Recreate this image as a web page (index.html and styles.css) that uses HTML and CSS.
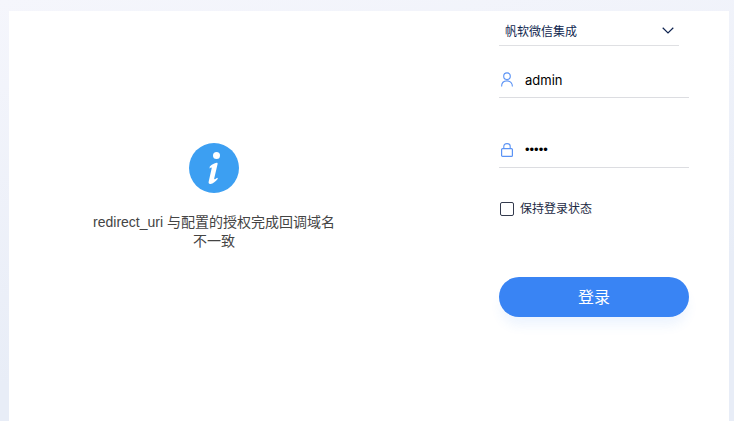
FILE: index.html
```html
<!DOCTYPE html>
<html lang="zh">
<head>
<meta charset="utf-8">
<title>登录</title>
<link rel="stylesheet" href="styles.css">
</head>
<body>
<main class="panel">
  <section class="qr-side">
    <svg class="info-icon" width="50" height="50" viewBox="0 0 50 50" aria-hidden="true">
      <circle cx="25" cy="25" r="25" fill="#3c9ff2"/>
      <circle cx="27.5" cy="12.5" r="3.5" fill="#fff"/>
      <path d="M20.8 23.4c2.2-1.9 4.6-3.2 6.8-3.6.9-.1 1.2.5 1 1.3l-3.4 14.4c-.2.9.5 1 1.2.5l1.8-1.3.7 1c-2.4 2.9-4.8 4.8-7.4 5.2-1.6.2-2.2-.8-1.8-2.4l3-13.2c.2-.9-.4-1-1.1-.5l-1.1.8z" fill="#fff"/>
    </svg>
    <p class="message">redirect_uri 与配置的授权完成回调域名不一致</p>
  </section>
  <form class="login-form">
    <div class="select-row">
      <span class="select-value">帆软微信集成</span>
      <svg class="chevron" width="12" height="7" viewBox="0 0 12 7" aria-hidden="true"><path d="M.7.8 6 6 11.3.8" fill="none" stroke="#0f2350" stroke-width="1.2"/></svg>
    </div>
    <div class="field field-user">
      <svg class="field-icon" width="12" height="15" viewBox="0 0 12 15" aria-hidden="true">
        <circle cx="6" cy="4.2" r="3.3" fill="none" stroke="#5b93f5" stroke-width="1.1"/>
        <path d="M.6 14.5c0-3.4 2.2-5.6 5.4-5.6s5.4 2.2 5.4 5.6" fill="none" stroke="#5b93f5" stroke-width="1.1"/>
      </svg>
      <span class="field-text">admin</span>
    </div>
    <div class="field field-pass">
      <svg class="field-icon" width="12" height="14" viewBox="0 0 12 14" aria-hidden="true">
        <rect x=".6" y="5.6" width="10.8" height="7.8" rx="1" fill="none" stroke="#5b93f5" stroke-width="1.2"/>
        <path d="M2.8 5.4V3.6C2.8 1.8 4.2.6 6 .6s3.2 1.2 3.2 3v1.8" fill="none" stroke="#5b93f5" stroke-width="1.1"/>
      </svg>
      <span class="field-dots">•••••</span>
    </div>
    <div class="remember">
      <span class="checkbox"></span>
      <span class="remember-label">保持登录状态</span>
    </div>
    <button class="submit" type="button"><span class="submit-label">登录</span></button>
  </form>
</main>
</body>
</html>
```
FILE: styles.css
```css
* { box-sizing: border-box; }
html, body { height: 100%; }
body {
  margin: 0;
  padding: 11px 5px 0 9px;
  overflow: hidden;
  background: linear-gradient(170deg, #f5f6fc 0%, #e8edf7 70%);
  font-family: "Liberation Sans", "Noto Sans CJK SC", sans-serif;
}
.panel {
  height: 410px;
  background: #fff;
  display: flex;
}
.qr-side {
  width: 490px;
  padding: 132px 0 0 84px;
  display: flex;
  flex-direction: column;
}
.info-icon { align-self: flex-start; margin-left: 96px; }
.message {
  width: 242px;
  margin: 20px 0 0;
  font-size: 14px;
  line-height: 19px;
  color: #444;
  text-align: center;
}
.login-form {
  width: 190px;
  display: flex;
  flex-direction: column;
}
.select-row {
  width: 180px;
  height: 35px;
  padding: 4px 5px 0 6px;
  border-bottom: 1px solid #dfe0e3;
  display: flex;
  align-items: center;
  justify-content: space-between;
  color: #10274f;
  font-size: 12px;
}
.chevron { margin-top: 1px; }
.field {
  height: 52px;
  border-bottom: 1px solid #dcdde1;
  display: flex;
  align-items: center;
  padding: 16px 0 0 2px;
}
.field-pass { height: 70px; padding-top: 34px; }
.field-icon { flex: none; }
.field-text, .field-dots {
  margin-left: 12px;
  font-family: "Inter", sans-serif;
  font-size: 13px;
  color: #000;
}
.field-dots { font-family: "Liberation Sans", sans-serif; }
.remember {
  margin-top: 32px;
  display: flex;
  align-items: center;
  padding-left: 1px;
}
.checkbox {
  width: 14px;
  height: 14px;
  border: 1px solid #333a4d;
  border-radius: 2px;
}
.remember-label { margin-left: 6px; font-size: 12px; color: #1c2a44; position: relative; top: -1px; }
.submit {
  margin-top: 60px;
  height: 40px;
  border: 0;
  padding: 0 0 2px;
  border-radius: 20px;
  background: #3984f4;
  color: #fff;
  font: inherit;
  font-size: 16px;
  box-shadow: 0 10px 12px -2px rgba(57, 132, 244, .09);
}
```
